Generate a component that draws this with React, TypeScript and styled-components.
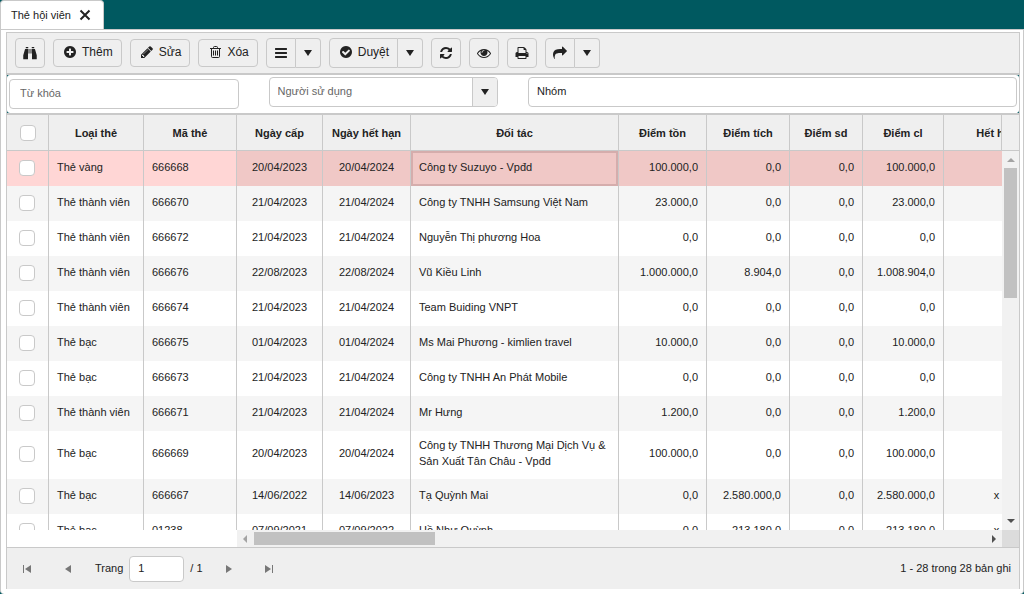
import React from "react";
import styled, { createGlobalStyle } from "styled-components";

const teal = "#005960";
const line = "#c9c9c9";
const surface = "#efefef";
const ink = "#222222";

const GlobalStyle = createGlobalStyle`
  *, *::before, *::after { box-sizing: border-box; }
  body {
    margin: 0;
    background: ${teal};
    color: ${ink};
    font: 11px/16px "Liberation Sans", Arial, sans-serif;
  }
  button, input, select { font: inherit; color: inherit; margin: 0; }
`;

const Page = styled.div`
  display: flex;
  flex-direction: column;
  height: 100vh;
`;

const TabBar = styled.nav`
  display: flex;
  height: 29px;
  flex: none;
`;

const Tab = styled.div`
  display: flex;
  align-items: center;
  gap: 8px;
  padding: 0 12px 2px 10px;
  margin-bottom: -1px;
  background: #fff;
  border: 1px solid ${line};
  border-bottom: 0;
  border-radius: 4px 4px 0 0;
`;

const TabClose = styled.button`
  display: flex;
  padding: 0;
  border: 0;
  background: none;
`;

const Panel = styled.main`
  display: flex;
  flex-direction: column;
  flex: 1;
  min-height: 0;
  padding: 2px 3px 5px 5px;
  background: #fff;
  border: 1px solid ${line};
  border-bottom: 0;
  border-radius: 0 0 4px 4px;
`;

const Frame = styled.div`
  display: flex;
  flex-direction: column;
  flex: 1;
  min-height: 0;
  border: 1px solid ${line};
  border-bottom: 0;
`;

const Toolbar = styled.div`
  display: flex;
  flex: none;
  align-items: center;
  gap: 8px;
  height: 42px;
  padding: 0 8px;
  background: ${surface};
  border-bottom: 2px solid ${line};
`;

const ToolButton = styled.button`
  display: flex;
  align-items: center;
  justify-content: center;
  width: 30px;
  height: 30px;
  padding: 0;
  background: ${surface};
  border: 1px solid ${line};
  border-radius: 4px;
`;

const LabelButton = styled(ToolButton)`
  gap: 5px;
  width: auto;
  height: 28px;
  padding: 0 8px 2px 9px;
  font-size: 12px;
`;

const Split = styled.div`
  display: flex;
  height: 30px;
  ${ToolButton} {
    height: 30px;
    border-radius: 4px 0 0 4px;
  }
  ${ToolButton} + ${ToolButton} {
    width: 25px;
    border-left: 0;
    border-radius: 0 4px 4px 0;
  }
`;

const Backdrop = styled.div`
  flex: none;
  background: ${teal};
  border-bottom: 2px solid ${line};
`;

const Filters = styled.form`
  display: grid;
  grid-template-columns: repeat(4, 1fr);
  column-gap: 30px;
  height: 38px;
  padding: 2px;
  background: #fff;
  border-radius: 3px;
`;

const Field = styled.input`
  width: 100%;
  height: 30px;
  padding: 0 8px 2px;
  background: #fff;
  border: 1px solid ${line};
  border-radius: 4px;
  outline: 0;
  &::placeholder { color: ${ink}; opacity: 1; }
`;

const SearchField = styled(Field)`
  align-self: center;
  padding: 0 10px 2px;
  &::placeholder { color: #666; }
`;

const WideField = styled(Field)`
  grid-column: span 2;
`;

const Combo = styled.div`
  display: flex;
  height: 30px;
  background: #fff;
  border: 1px solid ${line};
  border-radius: 4px;
  overflow: hidden;
`;

const ComboInput = styled.input`
  flex: 1;
  min-width: 0;
  padding: 0 8px 2px;
  border: 0;
  background: none;
  outline: 0;
  &::placeholder { color: #666; opacity: 1; }
`;

const ComboToggle = styled.button`
  display: flex;
  align-items: center;
  justify-content: center;
  width: 25px;
  padding: 0;
  background: ${surface};
  border: 0;
  border-left: 1px solid ${line};
`;

const Grid = styled.section`
  display: grid;
  grid-template-columns: minmax(0, 1fr) 17px;
  grid-template-rows: minmax(0, 1fr) 17px;
  flex: 1;
  min-height: 0;
  background: #fff;
`;

const Viewport = styled.div`
  overflow: hidden;
`;

const Table = styled.table`
  width: 1043px;
  table-layout: fixed;
  border-collapse: separate;
  border-spacing: 0;
`;

const Th = styled.th`
  height: 36px;
  padding: 0 8px;
  background: ${surface};
  border-right: 1px solid ${line};
  border-bottom: 1px solid ${line};
  font-weight: bold;
  white-space: nowrap;
`;

const Td = styled.td<{ $align?: "left" | "center" | "right"; $active?: boolean }>`
  height: 35px;
  padding: 6px 8px 10px;
  border-right: 1px solid ${line};
  text-align: ${(p) => p.$align ?? "left"};
  vertical-align: middle;
  box-shadow: ${(p) => (p.$active ? "inset 0 0 0 2px #d5adac" : "none")};
`;

const Tr = styled.tr<{ $selected?: boolean }>`
  background: #fff;
  &:nth-child(even) { background: #f5f5f5; }
  ${(p) =>
    p.$selected &&
    `
    td { background: #f0c8c6; }
    td:nth-child(-n + 3) { background: #ffd6d5; }
  `}
`;

const CheckTh = styled(Th)`
  padding: 0;
`;

const CheckTd = styled(Td)`
  padding: 0 2px 2px 0;
`;

const Check = styled.input`
  display: block;
  appearance: none;
  width: 16px;
  height: 16px;
  margin: 0 auto;
  background: #fff;
  border: 1px solid ${line};
  border-radius: 4px;
  &:checked { background: ${teal}; }
`;

const VerticalBar = styled.div`
  display: flex;
  flex-direction: column;
`;

const HeaderCap = styled.div`
  flex: none;
  height: 36px;
  margin-left: -1px;
  background: ${surface};
  border-left: 1px solid ${line};
  border-bottom: 1px solid ${line};
`;

const Track = styled.div<{ $vertical?: boolean }>`
  display: flex;
  flex-direction: ${(p) => (p.$vertical ? "column" : "row")};
  flex: 1;
  background: #f1f1f1;
`;

const Rail = styled.div<{ $vertical?: boolean }>`
  flex: 1;
  padding: ${(p) => (p.$vertical ? "0 2px" : "2px 0")};
`;

const Thumb = styled.div<{ $vertical?: boolean }>`
  width: ${(p) => (p.$vertical ? "13px" : "181px")};
  height: ${(p) => (p.$vertical ? "130px" : "13px")};
  background: #c1c1c1;
`;

const ArrowBox = styled.div`
  display: flex;
  align-items: center;
  justify-content: center;
  width: 17px;
  height: 17px;
`;

const HorizontalBar = styled.div`
  display: flex;
  padding-left: 230px;
`;

const Corner = styled.div`
  background: #dcdcdc;
`;

const Pager = styled.footer`
  display: flex;
  flex: none;
  align-items: center;
  height: 42px;
  padding: 0 8px 0 4px;
  background: ${surface};
  border-top: 1px solid ${line};
`;

const PagerButton = styled.button`
  display: flex;
  align-items: center;
  justify-content: center;
  width: 32px;
  height: 32px;
  margin-right: 8px;
  padding: 0;
  border: 0;
  background: none;
`;

const PageLabel = styled.label`
  display: flex;
  align-items: baseline;
  gap: 6px;
  margin: 0 10px 0 4px;
`;

const PageInput = styled.input`
  width: 55px;
  height: 26px;
  padding: 0 8px 2px;
  background: #fff;
  border: 1px solid ${line};
  border-radius: 4px;
`;

const PageStatus = styled.span`
  margin-left: auto;
  padding-bottom: 2px;
`;

const glyphs = {
  find: "M704 384v576h-64v704q0 32-32 32h-544q-32 0-32-32v-480l224-768q8-32 40-32zM832 384h128v576h-128zM1088 384h408q32 0 40 32l224 768v480q0 32-32 32h-544q-32 0-32-32v-704h-64zM384 128h288v160h-320v-128q0-32 32-32zM1120 128h288q32 0 32 32v128h-320z",
  plus: "M1344 960v-128q0-26-19-45t-45-19h-256v-256q0-26-19-45t-45-19h-128q-26 0-45 19t-19 45v256h-256q-26 0-45 19t-19 45v128q0 26 19 45t45 19h256v256q0 26 19 45t45 19h128q26 0 45-19t19-45v-256h256q26 0 45-19t19-45zm320-64q0 209-103 385.5t-279.5 279.5-385.5 103-385.5-103-279.5-279.5-103-385.5 103-385.5 279.5-279.5 385.5-103 385.5 103 279.5 279.5 103 385.5z",
  pencil: "M491 1536l91-91-235-235-91 91v107h128v128h107zm523-928q0-22-22-22-10 0-17 7l-542 542q-7 7-7 17 0 22 22 22 10 0 17-7l542-542q7-7 7-17zm-54-192l416 416-832 832h-416v-416zm683 96q0 53-37 90l-166 166-416-416 166-165q36-38 90-38 53 0 91 38l235 234q37 39 37 91z",
  bars: "M1664 1344v128q0 26-19 45t-45 19h-1408q-26 0-45-19t-19-45v-128q0-26 19-45t45-19h1408q26 0 45 19t19 45zm0-512v128q0 26-19 45t-45 19h-1408q-26 0-45-19t-19-45v-128q0-26 19-45t45-19h1408q26 0 45 19t19 45zm0-512v128q0 26-19 45t-45 19h-1408q-26 0-45-19t-19-45v-128q0-26 19-45t45-19h1408q26 0 45 19t19 45z",
  check: "M1412 734q0-28-18-46l-91-90q-19-19-45-19t-45 19l-408 407-226-226q-19-19-45-19t-45 19l-91 90q-18 18-18 46 0 27 18 45l362 362q19 19 45 19 27 0 46-19l543-543q18-18 18-45zm252 162q0 209-103 385.5t-279.5 279.5-385.5 103-385.5-103-279.5-279.5-103-385.5 103-385.5 279.5-279.5 385.5-103 385.5 103 279.5 279.5 103 385.5z",
  refresh: "M1639 1056q0 5-1 7-64 268-268 434.5t-478 166.5q-146 0-282.5-55t-243.5-157l-129 129q-19 19-45 19t-45-19-19-45v-448q0-26 19-45t45-19h448q26 0 45 19t19 45-19 45l-137 137q71 66 161 102t187 36q134 0 250-65t186-179q11-17 53-117 8-23 30-23h192q13 0 22.5 9.5t9.5 22.5zm25-800v448q0 26-19 45t-45 19h-448q-26 0-45-19t-19-45 19-45l138-138q-148-137-349-137-134 0-250 65t-186 179q-11 17-53 117-8 23-30 23h-199q-13 0-22.5-9.5t-9.5-22.5v-7q65-268 270-434.5t480-166.5q146 0 284 55.5t245 156.5l130-129q19-19 45-19t45 19 19 45z",
  eye: "M1664 960q-152-236-381-353 61 104 61 225 0 185-131.5 316.5t-316.5 131.5-316.5-131.5-131.5-316.5q0-121 61-225-229 117-381 353 133 205 333.5 326.5t434.5 121.5 434.5-121.5 333.5-326.5zm-720-384q0-20-14-34t-34-14q-125 0-214.5 89.5t-89.5 214.5q0 20 14 34t34 14 34-14 14-34q0-86 61-147t147-61q20 0 34-14t14-34zm848 384q0 34-20 69-140 230-376.5 368.5t-499.5 138.5-499.5-139-376.5-368q-20-35-20-69t20-69q140-229 376.5-368t499.5-139 499.5 139 376.5 368q20 35 20 69z",
  print: "M448 1536h896v-256h-896v256zm0-640h896v-384h-160q-40 0-68-28t-28-68v-160h-640v640zm1152 64q0-26-19-45t-45-19-45 19-19 45 19 45 45 19 45-19 19-45zm128 0v416q0 13-9.5 22.5t-22.5 9.5h-224v160q0 40-28 68t-68 28h-960q-40 0-68-28t-28-68v-160h-224q-13 0-22.5-9.5t-9.5-22.5v-416q0-79 56.5-135.5t135.5-56.5h64v-544q0-40 28-68t68-28h672q40 0 88 20t76 48l152 152q28 28 48 76t20 88v256h64q79 0 135.5 56.5t56.5 135.5z",
  share: "M1792 640q0 26-19 45l-512 512q-19 19-45 19t-45-19-19-45v-256h-224q-98 0-175.5 6t-154 21.5-133 42.5-105.5 69.5-80 101-48.5 138.5-17.5 181q0 55 5 123 0 6 2.5 23.5t2.5 26.5q0 15-8.5 25t-23.5 10q-16 0-28-17-7-9-13-22t-13.5-30-10.5-24q-127-285-127-451 0-199 53-333 162-403 875-403h224v-256q0-26 19-45t45-19 45 19l512 512q19 19 19 45z",
};

const Glyph = ({ name }: { name: keyof typeof glyphs }) => (
  <svg width="14" height="14" viewBox="0 0 1792 1792" fill={ink} aria-hidden="true">
    <path d={glyphs[name]} />
  </svg>
);

const Trash = () => (
  <svg width="14" height="14" viewBox="0 0 14 14" fill="none" stroke={ink} aria-hidden="true">
    <path d="M2 3.5h11M5.5 3.5v-1q0-1 1-1h2q1 0 1 1v1M3.5 3.5v8q0 1 1 1h6q1 0 1-1v-8M5.5 5.5v5M7.5 5.5v5M9.5 5.5v5" />
  </svg>
);

const Cross = () => (
  <svg width="12" height="12" viewBox="0 0 12 12" stroke={ink} strokeWidth="2" aria-hidden="true">
    <path d="M1.5 1.5l9 9M10.5 1.5l-9 9" />
  </svg>
);

const Caret = () => (
  <svg width="8" height="6" viewBox="0 0 8 6" fill={ink} aria-hidden="true">
    <path d="M0 0h8L4 6z" />
  </svg>
);

const arrows = { up: "M0 6l4-4 4 4z", down: "M0 1l4 4 4-4z", left: "M5 0L1 4l4 4z", right: "M2 0l4 4-4 4z" };

const Arrow = ({ to, color }: { to: keyof typeof arrows; color: string }) => (
  <ArrowBox>
    <svg width="8" height="8" viewBox="0 0 8 8" fill={color} aria-hidden="true">
      <path d={arrows[to]} />
    </svg>
  </ArrowBox>
);

const steps = {
  first: "M1 1h1v8H1zM9 1v8L3 5z",
  prev: "M9 1v8L3 5z",
  next: "M2 1v8l6-4z",
  last: "M1 1v8l6-4zM8 1h1v8H8z",
};

const Step = ({ to, label }: { to: keyof typeof steps; label: string }) => (
  <PagerButton type="button" aria-label={label}>
    <svg width="10" height="10" viewBox="0 0 10 10" fill="#777" aria-hidden="true">
      <path d={steps[to]} />
    </svg>
  </PagerButton>
);

const IconButton = ({ name, label }: { name: keyof typeof glyphs; label: string }) => (
  <ToolButton type="button" aria-label={label}>
    <Glyph name={name} />
  </ToolButton>
);

const MenuButton = ({ label }: { label: string }) => (
  <ToolButton type="button" aria-label={label}>
    <Caret />
  </ToolButton>
);

const widths = [42, 95, 93, 86, 88, 208, 88, 83, 73, 81, 106];
const headings = ["Loại thẻ", "Mã thẻ", "Ngày cấp", "Ngày hết hạn", "Đối tác", "Điểm tồn", "Điểm tích", "Điểm sd", "Điểm cl", "Hết hạn"];
const aligns = ["left", "left", "center", "center", "left", "right", "right", "right", "right", "center"] as const;

const rows = [
  ["Thẻ vàng", "666668", "20/04/2023", "20/04/2024", "Công ty Suzuyo - Vpđd", "100.000,0", "0,0", "0,0", "100.000,0", ""],
  ["Thẻ thành viên", "666670", "21/04/2023", "21/04/2024", "Công ty TNHH Samsung Việt Nam", "23.000,0", "0,0", "0,0", "23.000,0", ""],
  ["Thẻ thành viên", "666672", "21/04/2023", "21/04/2024", "Nguyễn Thị phương Hoa", "0,0", "0,0", "0,0", "0,0", ""],
  ["Thẻ thành viên", "666676", "22/08/2023", "22/08/2024", "Vũ Kiều Linh", "1.000.000,0", "8.904,0", "0,0", "1.008.904,0", ""],
  ["Thẻ thành viên", "666674", "21/04/2023", "21/04/2024", "Team Buiding VNPT", "0,0", "0,0", "0,0", "0,0", ""],
  ["Thẻ bạc", "666675", "01/04/2023", "01/04/2024", "Ms Mai Phương - kimlien travel", "10.000,0", "0,0", "0,0", "10.000,0", ""],
  ["Thẻ bạc", "666673", "21/04/2023", "21/04/2024", "Công ty TNHH An Phát Mobile", "0,0", "0,0", "0,0", "0,0", ""],
  ["Thẻ thành viên", "666671", "21/04/2023", "21/04/2024", "Mr Hưng", "1.200,0", "0,0", "0,0", "1.200,0", ""],
  ["Thẻ bạc", "666669", "20/04/2023", "20/04/2024", "Công ty TNHH Thương Mại Dịch Vụ & Sản Xuất Tân Châu - Vpđd", "100.000,0", "0,0", "0,0", "100.000,0", ""],
  ["Thẻ bạc", "666667", "14/06/2022", "14/06/2023", "Tạ Quỳnh Mai", "0,0", "2.580.000,0", "0,0", "2.580.000,0", "x"],
  ["Thẻ bạc", "01238", "07/09/2021", "07/09/2022", "Hồ Như Quỳnh", "0,0", "213.180,0", "0,0", "213.180,0", "x"],
];

export default function App() {
  return (
    <Page>
      <GlobalStyle />
      <TabBar>
        <Tab>
          Thẻ hội viên
          <TabClose type="button" aria-label="Đóng">
            <Cross />
          </TabClose>
        </Tab>
      </TabBar>
      <Panel>
        <Frame>
          <Toolbar>
            <IconButton name="find" label="Tìm kiếm" />
            <LabelButton type="button"><Glyph name="plus" />Thêm</LabelButton>
            <LabelButton type="button"><Glyph name="pencil" />Sửa</LabelButton>
            <LabelButton type="button"><Trash />Xóa</LabelButton>
            <Split>
              <IconButton name="bars" label="Danh mục" />
              <MenuButton label="Mở danh mục" />
            </Split>
            <Split>
              <LabelButton type="button"><Glyph name="check" />Duyệt</LabelButton>
              <MenuButton label="Tùy chọn duyệt" />
            </Split>
            <IconButton name="refresh" label="Làm mới" />
            <IconButton name="eye" label="Xem" />
            <IconButton name="print" label="In" />
            <Split>
              <IconButton name="share" label="Chia sẻ" />
              <MenuButton label="Tùy chọn chia sẻ" />
            </Split>
          </Toolbar>
          <Backdrop>
            <Filters onSubmit={(e) => e.preventDefault()}>
              <SearchField type="text" placeholder="Từ khóa" aria-label="Từ khóa" />
              <Combo>
                <ComboInput type="text" placeholder="Người sử dụng" aria-label="Người sử dụng" />
                <ComboToggle type="button" aria-label="Chọn người sử dụng"><Caret /></ComboToggle>
              </Combo>
              <WideField type="text" placeholder="Nhóm" aria-label="Nhóm" />
            </Filters>
          </Backdrop>
          <Grid>
            <Viewport>
              <Table>
                <colgroup>
                  {widths.map((w, i) => <col key={i} width={w} />)}
                </colgroup>
                <thead>
                  <tr>
                    <CheckTh><Check type="checkbox" aria-label="Chọn tất cả" /></CheckTh>
                    {headings.map((h) => <Th key={h} scope="col">{h}</Th>)}
                  </tr>
                </thead>
                <tbody>
                  {rows.map((row, r) => (
                    <Tr key={row[1]} $selected={r === 0}>
                      <CheckTd><Check type="checkbox" aria-label={`Chọn ${row[1]}`} /></CheckTd>
                      {row.map((cell, c) => (
                        <Td key={c} $align={aligns[c]} $active={r === 0 && c === 4}>{cell}</Td>
                      ))}
                    </Tr>
                  ))}
                </tbody>
              </Table>
            </Viewport>
            <VerticalBar>
              <HeaderCap />
              <Track $vertical>
                <Arrow to="up" color="#a3a3a3" />
                <Rail $vertical><Thumb $vertical /></Rail>
                <Arrow to="down" color="#505050" />
              </Track>
            </VerticalBar>
            <HorizontalBar>
              <Track>
                <Arrow to="left" color="#a3a3a3" />
                <Rail><Thumb /></Rail>
                <Arrow to="right" color="#505050" />
              </Track>
            </HorizontalBar>
            <Corner />
          </Grid>
          <Pager>
            <Step to="first" label="Trang đầu" />
            <Step to="prev" label="Trang trước" />
            <PageLabel>
              Trang
              <PageInput type="text" defaultValue="1" />
              / 1
            </PageLabel>
            <Step to="next" label="Trang sau" />
            <Step to="last" label="Trang cuối" />
            <PageStatus>1 - 28 trong 28 bản ghi</PageStatus>
          </Pager>
        </Frame>
      </Panel>
    </Page>
  );
}
